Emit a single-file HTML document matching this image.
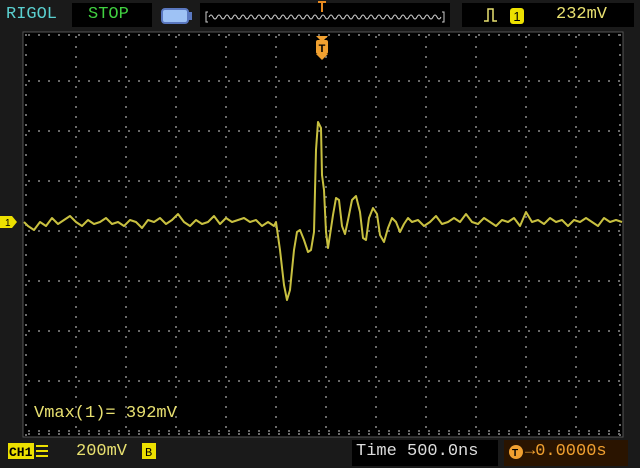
<!DOCTYPE html>
<html><head><style>
body{margin:0;background:#1c1c1c;width:640px;height:468px;overflow:hidden;font-family:"Liberation Mono",monospace}
.t{position:absolute;font-size:17px}
</style></head><body>
<svg width="640" height="468" style="position:absolute;left:0;top:0">
<rect width="640" height="468" fill="#1a1a1a"/>
<rect x="23" y="32" width="600" height="405" fill="#000" stroke="#555" stroke-width="1"/>
<g fill="#6a6a6a" id="g"></g>
<rect x="72" y="3" width="80" height="24" fill="#000"/>
<rect x="200" y="3" width="250" height="24" fill="#000"/>
<rect x="462" y="3" width="172" height="24" fill="#000"/>
<rect x="162" y="9" width="26" height="14" rx="3" fill="#9ec2f5" stroke="#5a78c0" stroke-width="2"/>
<rect x="188" y="12" width="4" height="8" fill="#5a78c0"/>
<polyline fill="none" stroke="#ccc" stroke-width="1" points="208,12 206,12 206,22 208,22"/>
<polyline fill="none" stroke="#ccc" stroke-width="1" points="442,12 444,12 444,22 442,22"/>
<path d="M209 17 q2-4 4 0 t4 0 t4 0 t4 0 t4 0 t4 0 t4 0 t4 0 t4 0 t4 0 t4 0 t4 0 t4 0 t4 0 t4 0 t4 0 t4 0 t4 0 t4 0 t4 0 t4 0 t4 0 t4 0 t4 0 t4 0 t4 0 t4 0 t4 0 t4 0 t4 0 t4 0 t4 0 t4 0 t4 0 t4 0 t4 0 t4 0 t4 0 t4 0 t4 0 t4 0 t4 0 t4 0 t4 0 t4 0 t4 0 t4 0 t4 0 t4 0 t4 0 t4 0 t4 0 t4 0 t4 0 t4 0 t4 0 t4 0 t4 0" fill="none" stroke="#ccc" stroke-width="1"/>
<path d="M318 2h8M322 2v10" stroke="#e88a20" stroke-width="2"/>
<path d="M484 21h4v-12h5v12h4" fill="none" stroke="#e8e070" stroke-width="1.5"/>
<rect x="510" y="8" width="14" height="16" rx="3" fill="#ece000"/>
<text x="517" y="21" font-size="13" text-anchor="middle" fill="#000" font-family="Liberation Sans">1</text>
<path d="M316 36h12l-6 6z" fill="#f0a030"/>
<rect x="316" y="40" width="12" height="14" rx="2" fill="#f0a030"/>
<path d="M316 54h12l-6 6z" fill="#f0a030"/>
<text x="322" y="52" font-size="11" font-weight="bold" text-anchor="middle" fill="#000" font-family="Liberation Sans">T</text>
<path d="M0 216h12l5 6-5 6H0z" fill="#ece000"/>
<text x="5" y="226" font-size="10" fill="#000" font-family="Liberation Sans">1</text>
<polyline fill="none" stroke="#c8c040" stroke-width="2" stroke-linejoin="round" points="
24,222 28,226 34,230 40,222 46,226 52,218 58,224 64,220 70,216 76,222 82,226 88,220 94,224 100,222 106,218 112,224 118,222 124,226 130,220 136,222 142,228 148,220 154,222 160,218 166,224 172,220 178,214 184,222 190,226 196,220 202,224 208,222 214,216 220,224 226,218 232,222 238,220 244,218 250,222 256,220 262,226 268,222 274,226 276,222 280,250 284,285 287,300 290,290 294,250 297,232 300,230 304,240 308,252 311,250 314,232 316,150 318,122 321,128 322,175 324,190 326,232 328,248 330,235 333,215 336,198 339,200 342,226 345,234 348,220 352,200 356,196 360,212 363,238 366,240 369,218 373,208 377,214 380,235 384,242 388,228 392,218 396,222 400,232 404,224 408,218 412,222 418,220 424,226 430,222 436,216 442,224 448,222 454,218 460,222 466,214 472,222 478,224 484,218 490,222 496,226 502,220 508,222 514,218 520,226 526,212 532,222 538,220 544,224 550,218 556,222 562,220 568,226 574,220 580,222 586,218 592,222 598,226 604,218 610,222 616,220 622,222"/>
<rect x="352" y="440" width="146" height="26" fill="#000"/>
<rect x="504" y="440" width="124" height="26" fill="#2a1400"/>
<rect x="8" y="443" width="26" height="16" fill="#ece000"/>
<text x="9" y="456" font-size="13" font-weight="bold" fill="#000" font-family="Liberation Mono">CH1</text>
<path d="M36 446h12M36 451h12M36 456h12" stroke="#ece000" stroke-width="2"/>
<rect x="142" y="443" width="14" height="16" fill="#ece000"/>
<text x="145" y="456" font-size="12" fill="#000" font-family="Liberation Mono">B</text>
<circle cx="516" cy="452" r="7" fill="#f0a030"/>
<text x="512" y="456" font-size="10" font-weight="bold" fill="#000" font-family="Liberation Sans">T</text>
</svg>
<script>
var g=document.getElementById('g'),s='';
for(var x=75;x<622;x+=50)for(var y=36;y<436;y+=10)s+='<rect x="'+x+'" y="'+y+'" width="2" height="2"/>';
for(var y=80;y<436;y+=50)for(var x=28;x<622;x+=10)s+='<rect x="'+x+'" y="'+y+'" width="2" height="2"/>';
for(var y=34;y<436;y+=10){s+='<rect x="25" y="'+y+'" width="2" height="2"/><rect x="619" y="'+y+'" width="2" height="2"/>';}
for(var x=28;x<622;x+=10){s+='<rect x="'+x+'" y="34" width="2" height="2"/><rect x="'+x+'" y="433" width="2" height="2"/>';}
g.innerHTML=s;
</script>
<div class="t" style="left:6px;top:5px;color:#5ad0d0">RIGOL</div>
<div class="t" style="left:88px;top:5px;color:#40d040">STOP</div>
<div class="t" style="left:556px;top:5px;color:#e8e070">232mV</div>
<div class="t" style="left:34px;top:404px;color:#e8e070">Vmax(1)= 392mV</div>
<div class="t" style="left:76px;top:442px;color:#e8e070">200mV</div>
<div class="t" style="left:356px;top:442px;color:#ddd">Time 500.0ns</div>
<div class="t" style="left:525px;top:442px;color:#f0a030">→0.0000s</div>
</body></html>
